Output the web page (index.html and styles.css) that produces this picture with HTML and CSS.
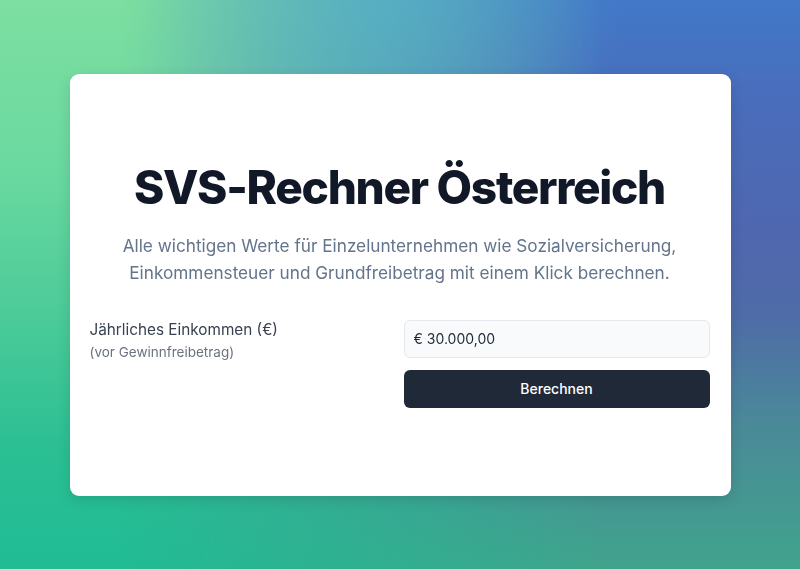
FILE: index.html
```html
<!DOCTYPE html>
<html lang="de">
<head>
<meta charset="utf-8">
<title>SVS-Rechner Österreich</title>
<link rel="stylesheet" href="styles.css">
</head>
<body>
<div class="bg bg-green"></div>
<div class="bg bg-blue"></div>
<div class="bg bg-cyan"></div>
<main class="page">
  <section class="card">
    <h1 class="title">SVS-Rechner Österreich</h1>
    <p class="subtitle">Alle wichtigen Werte für Einzelunternehmen wie Sozialversicherung,<br>Einkommensteuer und Grundfreibetrag mit einem Klick berechnen.</p>
    <form class="form" onsubmit="return false">
      <div class="label-col">
        <label class="label" for="income">Jährliches Einkommen (€)</label>
        <span class="hint">(vor Gewinnfreibetrag)</span>
      </div>
      <div class="input-col">
        <input id="income" class="input" type="text" value="€ 30.000,00">
        <button class="button" type="submit">Berechnen</button>
      </div>
    </form>
  </section>
</main>
</body>
</html>
```
FILE: styles.css
```css
* { box-sizing: border-box; }
html, body { margin: 0; height: 100%; }
body {
  font-family: Inter, "Noto Sans", sans-serif;
  background: #2fb894;
  overflow: hidden;
}
.bg {
  position: fixed;
  inset: 0;
}
.bg-green {
  background: linear-gradient(180deg, #7ddfa0 0%, #6ad9a0 30%, #4ccb99 55%, #2cbf93 78%, #20bc95 100%);
}
.bg-blue {
  background: linear-gradient(180deg, #4278c8 0%, #4a6cba 20%, #4f67b0 40%, #4f6ba8 55%, #4a8a98 75%, #40a48c 100%);
  -webkit-mask-image: linear-gradient(90deg, transparent 15%, rgba(0,0,0,0.55) 50%, #000 75%);
  mask-image: linear-gradient(90deg, transparent 15%, rgba(0,0,0,0.55) 50%, #000 75%);
}
.bg-cyan {
  background: radial-gradient(ellipse 30% 45% at 48% 0%, rgba(80,178,205,0.55), rgba(80,178,205,0) 100%);
}
.page {
  position: relative;
  height: 100%;
  display: flex;
  align-items: center;
  justify-content: center;
}
.card {
  width: 661px;
  height: 422px;
  background: #fff;
  border-radius: 9px;
  box-shadow: 0 4px 14px rgba(0,0,0,0.12);
  padding: 86px 21px 0 20px;
  text-align: center;
}
.title {
  margin: 0;
  font-size: 46px;
  line-height: 55px;
  font-weight: 800;
  color: #111827;
  letter-spacing: -1.3px;
}
.subtitle {
  margin: 17px 0 0;
  font-size: 17.2px;
  line-height: 27px;
  color: #64748b;
}
.form {
  margin-top: 34px;
  display: grid;
  grid-template-columns: 1fr 306px;
  gap: 8px;
  text-align: left;
}
.label-col {
  display: flex;
  flex-direction: column;
}
.label {
  font-size: 15.3px;
  line-height: 20px;
  color: #374151;
}
.hint {
  margin-top: 3px;
  font-size: 13.5px;
  line-height: 18px;
  color: #6b7280;
}
.input-col {
  display: flex;
  flex-direction: column;
  gap: 12px;
}
.input {
  height: 38px;
  width: 100%;
  border: 1px solid #e5e7eb;
  border-radius: 6px;
  background: #f9fafb;
  padding: 0 9px;
  font-family: inherit;
  font-size: 14px;
  color: #1f2937;
}
.button {
  height: 38px;
  width: 100%;
  border: none;
  border-radius: 6px;
  background: #1f2937;
  color: #fff;
  font-family: inherit;
  font-size: 14px;
  font-weight: 500;
}
```
